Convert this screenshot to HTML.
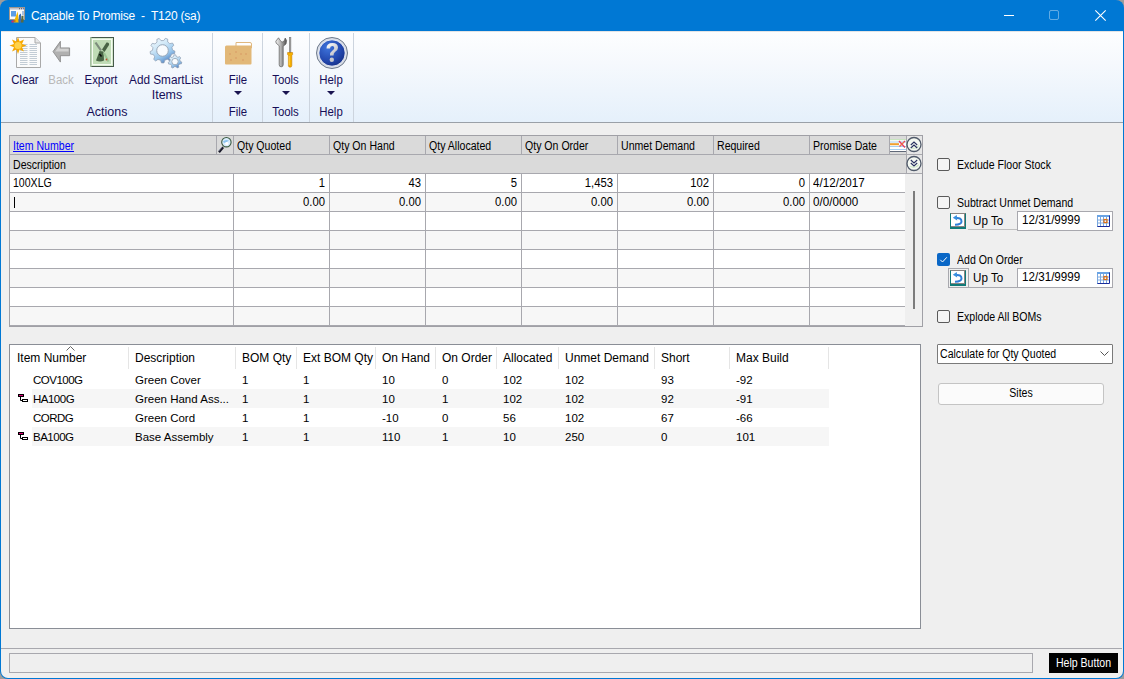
<!DOCTYPE html>
<html><head><meta charset="utf-8">
<style>
*{box-sizing:border-box;margin:0;padding:0}
html,body{width:1124px;height:679px;overflow:hidden;background:#9c9c9c}
body{font-family:"Liberation Sans",sans-serif;position:relative}
.a{position:absolute}
svg{position:absolute;overflow:visible}
#win{position:absolute;left:0;top:0;width:1124px;height:679px;background:#0078d4;border-radius:8px}
#client{position:absolute;left:1px;top:31px;width:1122px;height:647px;background:#efefef;border-radius:0 0 7px 7px}
#title{position:absolute;left:31px;top:7.5px;color:#fff;font-size:12px;letter-spacing:-0.22px;white-space:pre;line-height:16px}
#ribbon{position:absolute;left:1px;top:31px;width:1122px;height:92px;background:linear-gradient(#fdfeff 0%,#f6f9fd 35%,#e5f0fb 100%);border-bottom:1px solid #9aa0a8;box-shadow:inset 0 1px 0 rgba(0,0,0,0.10)}
.rl{position:absolute;color:#160e58;font-size:12px;white-space:pre;line-height:16px;text-align:center;transform:scaleX(0.95);transform-origin:50% 0}
.sep{position:absolute;top:33px;width:1px;height:89px;background:#ccd4de}
.tri{position:absolute;width:0;height:0;border-left:4px solid transparent;border-right:4px solid transparent;border-top:4px solid #1a1450}
.t{position:absolute;font-size:12px;white-space:pre;color:#000;line-height:13px;transform:scaleX(0.88);transform-origin:0 0}
.t.r{transform-origin:100% 0}
.t.c{transform-origin:50% 0}
.t.d{transform:scaleX(0.97)}
.t.n{transform:scaleX(0.94)}
.s{position:absolute;font-size:12px;white-space:pre;color:#000;line-height:14px}
.hl{position:absolute;height:1px;background:#a8a8ae}
.vl{position:absolute;width:1px;background:#a8a8ae}
.r{text-align:right}
.cb{position:absolute;width:13px;height:13px;border:1px solid #5a5a5a;border-radius:2px;background:#f4f4f4}
</style></head><body>
<div id="win"></div>
<div id="client"></div>

<!-- title bar -->
<svg style="left:9px;top:7px" width="17" height="17" viewBox="0 0 17 17">
  <rect x="0.5" y="0.5" width="15" height="12" fill="#fbfbfb" stroke="#a09890"/>
  <rect x="1" y="1" width="14" height="1.6" fill="#c4c4cc"/>
  <rect x="10" y="1.2" width="1" height="1" fill="#505060"/><rect x="12" y="1.2" width="1" height="1" fill="#505060"/><rect x="14" y="1.2" width="1" height="1" fill="#4060c0"/>
  <rect x="2" y="4" width="5" height="5.5" fill="#5c9ee6"/>
  <rect x="13.5" y="4" width="1" height="4" fill="#5a88c8"/>
  <path d="M4.5 15.5 L8.6 4.6 L10 15.5Z" fill="#f4b800"/>
  <path d="M9.4 15.5 L10 8 L12 6.5 L12.5 15.5Z" fill="#3c6cb0"/>
  <path d="M12 15.5 L12.5 9 L14.5 8.5 L14.5 15.5Z" fill="#5c6a3c"/>
  <rect x="2.5" y="13.5" width="2" height="2" fill="#e0206a"/>
  <rect x="4.5" y="13" width="2" height="2" fill="#c07020"/>
</svg>
<div id="title">Capable To Promise  -  T120 (sa)</div>
<div class="a" style="left:1004px;top:15px;width:10px;height:1px;background:#fff"></div>
<div class="a" style="left:1049px;top:10px;width:10px;height:10px;border:1px solid rgba(255,255,255,0.38);border-radius:2px"></div>
<svg style="left:1095px;top:10px" width="11" height="11" viewBox="0 0 11 11"><path d="M0.3 0.3 L10.7 10.7 M10.7 0.3 L0.3 10.7" stroke="#fff" stroke-width="1.1"/></svg>

<!-- ribbon -->
<div id="ribbon"></div>
<div class="sep" style="left:212px"></div>
<div class="sep" style="left:262px"></div>
<div class="sep" style="left:309px"></div>
<div class="sep" style="left:353px"></div>

<!-- Clear icon -->
<svg style="left:10px;top:37px" width="32" height="32" viewBox="0 0 32 32">
  <path d="M6.5 0.5 H25 L30.5 6 V30.5 H6.5Z" fill="#fbfbfb" stroke="#a9a9a9"/>
  <path d="M25 0.5 V6 H30.5" fill="#e6e6e6" stroke="#a9a9a9"/>
  <g stroke="#b4c0cc" stroke-width="0.8">
    <path d="M10 7.5H17.5 M19.5 7.5H27 M10 9.5H17.5 M19.5 9.5H27 M10 11.5H17.5 M19.5 11.5H27 M10 13.5H17.5 M19.5 13.5H27 M10 15.5H17.5 M19.5 15.5H27 M10 17.5H17.5 M19.5 17.5H27 M10 19.5H17.5 M19.5 19.5H27 M10 21.5H17.5 M19.5 21.5H27 M10 23.5H17.5 M19.5 23.5H27 M10 25.5H17.5 M19.5 25.5H27 M10 27.5H17.5 M19.5 27.5H27"/>
  </g>
  <path d="M8 0 L9.6 4.5 L14 2.5 L12 7 L16.5 8.5 L12 10.2 L14 14.5 L9.6 12.5 L8 17 L6.4 12.5 L2 14.5 L4 10.2 L-0.5 8.5 L4 7 L2 2.5 L6.4 4.5Z" fill="#f7a800"/>
  <circle cx="8" cy="8.5" r="3.6" fill="#ffd24a"/>
</svg>
<!-- Back icon -->
<svg style="left:53px;top:41px" width="18" height="22" viewBox="0 0 18 22">
  <path d="M0 10.6 L7.4 0.3 V6.9 H16.6 V14.7 H7.4 V21.1Z" fill="#b0b0b0" stroke="#848484" stroke-width="0.8" stroke-linejoin="round"/>
  <path d="M2.2 10.4 L6.6 4.2 V7.8 H15.6 V10.6 H2.2Z" fill="#d2d2d2"/>
</svg>
<!-- Export icon -->
<svg style="left:90px;top:37px" width="24" height="30" viewBox="0 0 24 30">
  <rect x="0.5" y="0.5" width="23" height="29" fill="#d4e8cc" stroke="#46584a"/>
  <rect x="0" y="0" width="1.5" height="30" fill="#a4bea0"/>
  <rect x="2.5" y="2.5" width="19" height="25" fill="#c0dcb6" stroke="#f4fbf0" stroke-width="1"/>
  <path d="M5.5 5.5 L11 13.5" stroke="#7c8c7c" stroke-width="2.2"/>
  <path d="M12 12.5 L16.5 5.5 Q19.5 5 19 8 L14.5 15Z" fill="#486444"/>
  <path d="M6 23.5 L9.5 14 L13.5 14.5 L14 23.5 Q10 25.5 6 23.5Z" fill="#4a6646"/>
  <path d="M9.5 17 L11.5 19.5" stroke="#0a0a0a" stroke-width="1.4"/>
  <path d="M14 16 L18.5 24.5" stroke="#9cc494" stroke-width="2"/>
  <circle cx="16.5" cy="22.5" r="0.9" fill="#c05030"/>
</svg>
<!-- Gears icon -->
<svg style="left:149px;top:37px" width="34" height="32" viewBox="0 0 34 32">
  <defs>
    <linearGradient id="gg" x1="0" y1="0" x2="0.6" y2="1"><stop offset="0" stop-color="#f4f9fd"/><stop offset="0.4" stop-color="#d2e9f8"/><stop offset="0.75" stop-color="#98c6ec"/><stop offset="1" stop-color="#5a88c4"/></linearGradient>
  </defs>
  <path d="M23.48,12.94 L25.98,14.20 L25.59,16.69 L22.82,17.12 L21.51,19.49 L22.61,22.06 L20.71,23.71 L18.32,22.26 L15.78,23.24 L14.98,25.91 L12.45,25.96 L11.56,23.31 L8.99,22.43 L6.66,23.96 L4.69,22.37 L5.71,19.77 L4.31,17.44 L1.53,17.11 L1.05,14.63 L3.50,13.29 L3.93,10.61 L2.01,8.58 L3.24,6.37 L5.98,6.91 L8.02,5.13 L7.86,2.34 L10.22,1.44 L11.97,3.62 L14.68,3.57 L16.35,1.33 L18.74,2.15 L18.68,4.95 L20.79,6.65 L23.51,6.01 L24.81,8.18 L22.97,10.28Z" fill="url(#gg)" stroke="#8c9cb0" stroke-width="0.7"/>
  <circle cx="13.5" cy="13.5" r="5.8" fill="#f8fbfe" stroke="#9aa8b8" stroke-width="1"/>
  <path d="M31.19,24.23 L32.78,25.09 L32.43,26.82 L30.62,26.98 L29.53,28.42 L29.85,30.21 L28.27,31.01 L27.02,29.70 L25.21,29.74 L24.02,31.10 L22.41,30.37 L22.65,28.58 L21.49,27.19 L19.68,27.10 L19.25,25.39 L20.80,24.46 L21.17,22.69 L20.10,21.22 L21.17,19.81 L22.87,20.45 L24.48,19.63 L24.97,17.88 L26.73,17.84 L27.29,19.56 L28.94,20.31 L30.61,19.60 L31.74,20.96 L30.74,22.47Z" fill="url(#gg)" stroke="#8c9cb0" stroke-width="0.7"/>
  <circle cx="26" cy="24.6" r="3.2" fill="#f8fbfe" stroke="#9aa8b8" stroke-width="0.9"/>
</svg>
<!-- Folder icon -->
<svg style="left:225px;top:42px" width="27" height="23" viewBox="0 0 27 23">
  <path d="M11 0.5 H25 Q26.5 0.5 26.5 2 V6 H11Z" fill="#fff" stroke="#e0b880"/>
  <path d="M0 5 Q0 3.5 1.5 3.5 H26.5 V21.5 Q26.5 22.5 25.5 22.5 H1 Q0 22.5 0 21.5Z" fill="#e2b878"/>
  <g fill="#d6915e"><circle cx="5" cy="12" r="0.7"/><circle cx="11" cy="10" r="0.7"/><circle cx="16" cy="12" r="0.7"/><circle cx="21" cy="12" r="0.7"/><circle cx="11" cy="16" r="0.7"/><circle cx="6" cy="18" r="0.7"/><circle cx="18" cy="18" r="0.7"/></g>
</svg>
<!-- Tools icon -->
<svg style="left:275px;top:37px" width="21" height="31" viewBox="0 0 21 31">
  <defs><linearGradient id="wr" x1="0" x2="1"><stop offset="0" stop-color="#f4f4f4"/><stop offset="0.45" stop-color="#b4b4b4"/><stop offset="1" stop-color="#505050"/></linearGradient></defs>
  <path d="M3.5 0.8 L0.8 4.2 L1.2 6.2 L4.2 8.8 L4.2 27.8 Q4.2 29.8 6.2 29.8 Q8.2 29.8 8.2 27.8 L8.2 9.2 L11 7 L11.6 3.6 L10.2 1 L9.2 4 L7 5.2 L5.2 3.4Z" fill="url(#wr)" stroke="#5a5a5a" stroke-width="0.7"/>
  <rect x="14.3" y="0.5" width="1.6" height="15.5" fill="#a8a8a8" stroke="#6a6a6a" stroke-width="0.5"/>
  <path d="M12.6 15.5 H17.6 V17.5 L16.8 18.5 V28.5 Q16.8 30.2 15.1 30.2 Q13.4 30.2 13.4 28.5 V18.5 L12.6 17.5Z" fill="#f5b000" stroke="#c47a00" stroke-width="0.6"/>
  <path d="M14.2 19 V28" stroke="#ffd860" stroke-width="0.8"/>
</svg>
<!-- Help icon -->
<svg style="left:316px;top:37px" width="32" height="32" viewBox="0 0 32 32">
  <defs><radialGradient id="hb" cx="0.35" cy="0.3" r="0.8"><stop offset="0" stop-color="#3e74dc"/><stop offset="0.65" stop-color="#2246ac"/><stop offset="1" stop-color="#142c80"/></radialGradient></defs>
  <circle cx="16" cy="16" r="15.5" fill="#d8dde6" stroke="#6e7a8c" stroke-width="1"/>
  <circle cx="16" cy="16" r="13.2" fill="url(#hb)" stroke="#fff" stroke-width="0.8"/>
  <defs><linearGradient id="qm" x1="0" y1="0" x2="1" y2="1"><stop offset="0" stop-color="#ffffff"/><stop offset="1" stop-color="#b8b8c0"/></linearGradient></defs><path d="M10.5 11.5 Q10.5 6 16.5 6 Q22 6 22 10.8 Q22 13.5 19 15 Q17.5 16 17.5 18.5 H14 Q14 15 16.5 13.5 Q18.3 12.4 18.3 11 Q18.3 9 16.2 9 Q14 9 14 11.5Z" fill="url(#qm)"/>
  <circle cx="15.8" cy="22.7" r="2.2" fill="#c8c8cc"/>
</svg>

<div class="rl" style="left:0px;width:50px;top:72px">Clear</div>
<div class="rl" style="left:36px;width:50px;top:72px;color:#b8b8b8">Back</div>
<div class="rl" style="left:76px;width:50px;top:72px">Export</div>
<div class="rl" style="left:116px;width:100px;top:72px;transform:scaleX(0.98)">Add SmartList</div>
<div class="rl" style="left:117px;width:100px;top:87px;transform:scaleX(1.04)">Items</div>
<div class="rl" style="left:57px;width:100px;top:104px;transform:scaleX(1.04)">Actions</div>
<div class="rl" style="left:213px;width:50px;top:72px">File</div>
<div class="rl" style="left:213px;width:50px;top:104px">File</div>
<div class="rl" style="left:262px;width:47px;top:72px">Tools</div>
<div class="rl" style="left:262px;width:47px;top:104px">Tools</div>
<div class="rl" style="left:309px;width:44px;top:72px">Help</div>
<div class="rl" style="left:309px;width:44px;top:104px">Help</div>
<div class="tri" style="left:234px;top:91px"></div>
<div class="tri" style="left:282px;top:91px"></div>
<div class="tri" style="left:327px;top:91px"></div>

<!-- TOP GRID -->
<div class="a" style="left:9px;top:135px;width:914px;height:192px;border:1px solid #a0a0a6;background:#efefef"></div>
<div class="a" style="left:10px;top:136px;width:896px;height:37px;background:#dadada"></div>
<div class="a" style="left:906px;top:136px;width:16px;height:37px;background:#e6e6e6"></div>
<!-- data row backgrounds -->
<div class="a" style="left:10px;top:174px;width:895px;height:18px;background:#fff"></div>
<div class="a" style="left:10px;top:193px;width:895px;height:18px;background:#f7f7f7"></div>
<div class="a" style="left:10px;top:212px;width:895px;height:18px;background:#fff"></div>
<div class="a" style="left:10px;top:231px;width:895px;height:18px;background:#f7f7f7"></div>
<div class="a" style="left:10px;top:250px;width:895px;height:18px;background:#fff"></div>
<div class="a" style="left:10px;top:269px;width:895px;height:18px;background:#f7f7f7"></div>
<div class="a" style="left:10px;top:288px;width:895px;height:18px;background:#fff"></div>
<div class="a" style="left:10px;top:307px;width:895px;height:18px;background:#f7f7f7"></div>
<!-- horizontal lines -->
<div class="hl" style="left:10px;top:154px;width:912px"></div>
<div class="hl" style="left:10px;top:173px;width:912px"></div>
<div class="hl" style="left:10px;top:192px;width:895px"></div>
<div class="hl" style="left:10px;top:211px;width:895px"></div>
<div class="hl" style="left:10px;top:230px;width:895px"></div>
<div class="hl" style="left:10px;top:249px;width:895px"></div>
<div class="hl" style="left:10px;top:268px;width:895px"></div>
<div class="hl" style="left:10px;top:287px;width:895px"></div>
<div class="hl" style="left:10px;top:306px;width:895px"></div>
<div class="hl" style="left:10px;top:325px;width:895px"></div>
<!-- header vertical lines -->
<div class="vl" style="left:216px;top:136px;height:18px"></div>
<div class="vl" style="left:889px;top:136px;height:18px"></div>
<div class="vl" style="left:906px;top:136px;height:37px"></div>
<!-- column lines -->
<div class="vl" style="left:233px;top:136px;height:18px"></div>
<div class="vl" style="left:329px;top:136px;height:18px"></div>
<div class="vl" style="left:425px;top:136px;height:18px"></div>
<div class="vl" style="left:521px;top:136px;height:18px"></div>
<div class="vl" style="left:617px;top:136px;height:18px"></div>
<div class="vl" style="left:713px;top:136px;height:18px"></div>
<div class="vl" style="left:809px;top:136px;height:18px"></div>
<div class="vl" style="left:233px;top:174px;height:152px"></div>
<div class="vl" style="left:329px;top:174px;height:152px"></div>
<div class="vl" style="left:425px;top:174px;height:152px"></div>
<div class="vl" style="left:521px;top:174px;height:152px"></div>
<div class="vl" style="left:617px;top:174px;height:152px"></div>
<div class="vl" style="left:713px;top:174px;height:152px"></div>
<div class="vl" style="left:809px;top:174px;height:152px"></div>
<!-- scrollbar thumb -->
<div class="a" style="left:913px;top:191px;width:2px;height:118px;background:#7c7c7c"></div>

<!-- header texts -->
<div class="t" style="left:13px;top:140px;color:#0000ff;text-decoration:underline">Item Number</div>
<svg style="left:218px;top:137px" width="15" height="16" viewBox="0 0 15 16">
  <path d="M1 15.2 L5.2 10.2" stroke="#1a1a2a" stroke-width="2.2"/>
  <path d="M0.6 14 L4.2 9.8" stroke="#8890a8" stroke-width="0.8"/>
  <circle cx="8.4" cy="5.2" r="4.7" fill="#d8ecfc" stroke="#3a5a40" stroke-width="1.1"/>
  <path d="M5 4.5 Q7 2 11 3.5 Q9 5 6 6Z" fill="#8cc4f0"/>
  <circle cx="8.8" cy="6.5" r="1.6" fill="#fff"/>
</svg>
<div class="t" style="left:237px;top:140px">Qty Quoted</div>
<div class="t" style="left:333px;top:140px">Qty On Hand</div>
<div class="t" style="left:429px;top:140px">Qty Allocated</div>
<div class="t" style="left:525px;top:140px">Qty On Order</div>
<div class="t" style="left:621px;top:140px">Unmet Demand</div>
<div class="t" style="left:717px;top:140px">Required</div>
<div class="t" style="left:813px;top:140px">Promise Date</div>
<svg style="left:890px;top:139px" width="16" height="13" viewBox="0 0 16 13">
  <rect x="0" y="0" width="16" height="13" fill="#fff"/>
  <rect x="0" y="0" width="16" height="1.2" fill="#c8e4c0"/>
  <rect x="0" y="2.5" width="16" height="1" fill="#a8d0f0"/>
  <rect x="0" y="7" width="16" height="1" fill="#a8d0f0"/>
  <rect x="0" y="10" width="16" height="1" fill="#a8d0f0"/>
  <rect x="0" y="4.2" width="9" height="2" fill="#f0a030"/>
  <path d="M0 12.5 H16" stroke="#606878" stroke-width="1"/>
  <path d="M9 2 L15 8.5 M15 2 L9.5 7.5" stroke="#e84060" stroke-width="1.4"/>
  <path d="M14 3 L10 7" stroke="#f09030" stroke-width="0.8"/>
</svg>
<svg style="left:906px;top:136px" width="17" height="36" viewBox="0 0 17 36">
  <circle cx="8" cy="8.5" r="7" fill="#f4f8f2" stroke="#505a6a" stroke-width="1.3"/>
  <path d="M3 11 Q6 14 11 12 Q13 11 13 9 L9 12Z" fill="#c8e4c0"/>
  <path d="M4.8 9 L8 6 L11.2 9 M4.8 12 L8 9 L11.2 12" stroke="#283060" stroke-width="1.1" fill="none"/>
  <circle cx="8" cy="27.5" r="7" fill="#f4f8f2" stroke="#505a6a" stroke-width="1.3"/>
  <path d="M3 30 Q6 33 11 31 Q13 30 13 28 L9 31Z" fill="#c8e4c0"/>
  <path d="M4.8 24 L8 27 L11.2 24 M4.8 27 L8 30 L11.2 27" stroke="#283060" stroke-width="1.1" fill="none"/>
</svg>
<div class="t" style="left:13px;top:159px">Description</div>

<!-- data rows -->
<div class="t" style="left:13px;top:177px">100XLG</div>
<div class="t r n" style="left:233px;width:92px;top:177px">1</div>
<div class="t r n" style="left:329px;width:92px;top:177px">43</div>
<div class="t r n" style="left:425px;width:92px;top:177px">5</div>
<div class="t r n" style="left:521px;width:92px;top:177px">1,453</div>
<div class="t r n" style="left:617px;width:92px;top:177px">102</div>
<div class="t r n" style="left:713px;width:92px;top:177px">0</div>
<div class="t d" style="left:813px;top:177px">4/12/2017</div>
<div class="a" style="left:14px;top:197px;width:1px;height:11px;background:#000"></div>
<div class="t r n" style="left:233px;width:92px;top:196px">0.00</div>
<div class="t r n" style="left:329px;width:92px;top:196px">0.00</div>
<div class="t r n" style="left:425px;width:92px;top:196px">0.00</div>
<div class="t r n" style="left:521px;width:92px;top:196px">0.00</div>
<div class="t r n" style="left:617px;width:92px;top:196px">0.00</div>
<div class="t r n" style="left:713px;width:92px;top:196px">0.00</div>
<div class="t d" style="left:813px;top:196px">0/0/0000</div>

<!-- RIGHT PANEL -->
<div class="cb" style="left:937px;top:158px"></div>
<div class="t" style="left:957px;top:159px">Exclude Floor Stock</div>
<div class="cb" style="left:937px;top:196px"></div>
<div class="t" style="left:957px;top:197px">Subtract Unmet Demand</div>

<div class="a" style="left:968px;top:229px;width:49px;height:1px;background:#c0c0c0"></div>
<div class="a" style="left:950px;top:213px;width:16px;height:16px;background:#fff;border:1px solid #0f7a78;border-top-color:#8a8482;border-bottom:2px solid #0f7a78;box-shadow:inset -1px 0 0 #8a8482, inset 0 -1px 0 #8a8482"></div>
<svg style="left:952px;top:215px" width="12" height="12" viewBox="0 0 12 12"><path d="M4 3 Q9.5 2.5 9.5 6.5 Q9.5 9.5 3 9.8" stroke="#2f7fd8" stroke-width="2" fill="none"/><path d="M0.8 2.8 L4.8 0 L5.2 5.5Z" fill="#3a90e0"/></svg>
<div class="t d" style="left:973px;top:215px">Up To</div>
<div class="a" style="left:1017px;top:211px;width:96px;height:20px;background:#fff;border:1px solid #a8a8ae"></div>
<div class="t d" style="left:1022px;top:214px">12/31/9999</div>
<svg style="left:1097px;top:215px" width="13" height="12" viewBox="0 0 13 12">
  <rect x="0" y="0" width="13" height="12" fill="#fff"/>
  <rect x="0" y="0" width="13" height="2" fill="#6aa4e4"/>
  <path d="M0.5 2V12 M3.5 2V12 M6.5 2V12 M9.5 2V12 M0 5H13 M0 8H13" stroke="#7aa8e0" stroke-width="1"/>
  <path d="M12.5 0.5V11.5H0.5" stroke="#1a2c9c" stroke-width="1" fill="none"/>
  <rect x="7" y="4.5" width="3" height="3" fill="none" stroke="#e07010" stroke-width="1.2"/>
</svg>

<div class="a" style="left:937px;top:253px;width:13px;height:13px;border-radius:2px;background:#0a67c6"></div>
<svg style="left:937px;top:253px" width="13" height="13" viewBox="0 0 13 13"><path d="M3.3 6.8 L5.5 9 L9.8 4.3" stroke="#fff" stroke-width="1" fill="none"/></svg>
<div class="t" style="left:957px;top:254px">Add On Order</div>

<div class="a" style="left:948px;top:268px;width:21px;height:20px;border:1px solid #a8a8ae"></div>
<div class="a" style="left:968px;top:287px;width:49px;height:1px;background:#a8a8ae"></div>
<div class="a" style="left:950px;top:270px;width:16px;height:16px;background:#fff;border:1px solid #0f7a78;border-top-color:#8a8482;border-bottom:2px solid #0f7a78;box-shadow:inset -1px 0 0 #8a8482, inset 0 -1px 0 #8a8482"></div>
<svg style="left:952px;top:272px" width="12" height="12" viewBox="0 0 12 12"><path d="M4 3 Q9.5 2.5 9.5 6.5 Q9.5 9.5 3 9.8" stroke="#2f7fd8" stroke-width="2" fill="none"/><path d="M0.8 2.8 L4.8 0 L5.2 5.5Z" fill="#3a90e0"/></svg>
<div class="t d" style="left:973px;top:272px">Up To</div>
<div class="a" style="left:1017px;top:268px;width:96px;height:20px;background:#fff;border:1px solid #a8a8ae"></div>
<div class="t d" style="left:1022px;top:271px">12/31/9999</div>
<svg style="left:1097px;top:272px" width="13" height="12" viewBox="0 0 13 12">
  <rect x="0" y="0" width="13" height="12" fill="#fff"/>
  <rect x="0" y="0" width="13" height="2" fill="#6aa4e4"/>
  <path d="M0.5 2V12 M3.5 2V12 M6.5 2V12 M9.5 2V12 M0 5H13 M0 8H13" stroke="#7aa8e0" stroke-width="1"/>
  <path d="M12.5 0.5V11.5H0.5" stroke="#1a2c9c" stroke-width="1" fill="none"/>
  <rect x="7" y="4.5" width="3" height="3" fill="none" stroke="#e07010" stroke-width="1.2"/>
</svg>

<div class="cb" style="left:937px;top:310px"></div>
<div class="t" style="left:957px;top:311px">Explode All BOMs</div>

<div class="a" style="left:937px;top:344px;width:176px;height:20px;background:#fff;border:1px solid #7a7a7a;border-radius:1px"></div>
<div class="t" style="left:940px;top:348px">Calculate for Qty Quoted</div>
<svg style="left:1100px;top:351px" width="9" height="6" viewBox="0 0 9 6"><path d="M0.5 0.5 L4.5 4.5 L8.5 0.5" stroke="#555" stroke-width="1" fill="none"/></svg>

<div class="a" style="left:938px;top:383px;width:166px;height:22px;background:#fbfbfb;border:1px solid #c4c4c4;border-radius:3px"></div>
<div class="t c" style="left:938px;width:166px;top:387px;text-align:center">Sites</div>

<!-- LOWER LIST -->
<div class="a" style="left:9px;top:344px;width:912px;height:285px;background:#fff;border:1px solid #8a8e96"></div>
<div class="a" style="left:32px;top:389px;width:797px;height:19px;background:#f6f6f6"></div>
<div class="a" style="left:32px;top:427px;width:797px;height:19px;background:#f6f6f6"></div>
<div class="a" style="left:128px;top:347px;width:1px;height:22px;background:#e5e5e5"></div>
<div class="a" style="left:235px;top:347px;width:1px;height:22px;background:#e5e5e5"></div>
<div class="a" style="left:296px;top:347px;width:1px;height:22px;background:#e5e5e5"></div>
<div class="a" style="left:375px;top:347px;width:1px;height:22px;background:#e5e5e5"></div>
<div class="a" style="left:435px;top:347px;width:1px;height:22px;background:#e5e5e5"></div>
<div class="a" style="left:496px;top:347px;width:1px;height:22px;background:#e5e5e5"></div>
<div class="a" style="left:558px;top:347px;width:1px;height:22px;background:#e5e5e5"></div>
<div class="a" style="left:654px;top:347px;width:1px;height:22px;background:#e5e5e5"></div>
<div class="a" style="left:729px;top:347px;width:1px;height:22px;background:#e5e5e5"></div>
<div class="a" style="left:828px;top:347px;width:1px;height:22px;background:#e5e5e5"></div>
<svg style="left:66px;top:346px" width="9" height="5" viewBox="0 0 9 5"><path d="M0.5 4.5 L4.5 0.5 L8.5 4.5" stroke="#666" stroke-width="1" fill="none"/></svg>

<div class="s" style="left:17px;top:351px">Item Number</div>
<div class="s" style="left:135px;top:351px">Description</div>
<div class="s" style="left:242px;top:351px">BOM Qty</div>
<div class="s" style="left:303px;top:351px">Ext BOM Qty</div>
<div class="s" style="left:382px;top:351px">On Hand</div>
<div class="s" style="left:442px;top:351px">On Order</div>
<div class="s" style="left:503px;top:351px">Allocated</div>
<div class="s" style="left:565px;top:351px">Unmet Demand</div>
<div class="s" style="left:661px;top:351px">Short</div>
<div class="s" style="left:736px;top:351px">Max Build</div>

<svg style="left:18px;top:394px" width="11" height="9" viewBox="0 0 11 9"><path d="M2.5 3 V6.5 H4.5" stroke="#000" stroke-width="1" fill="none"/><rect x="0.5" y="0.5" width="5" height="2" fill="#e0007a" stroke="#000" stroke-width="1"/><rect x="4.5" y="5.5" width="5" height="2" fill="#fff" stroke="#000" stroke-width="1"/></svg>
<svg style="left:18px;top:432px" width="11" height="9" viewBox="0 0 11 9"><path d="M2.5 3 V6.5 H4.5" stroke="#000" stroke-width="1" fill="none"/><rect x="0.5" y="0.5" width="5" height="2" fill="#e0007a" stroke="#000" stroke-width="1"/><rect x="4.5" y="5.5" width="5" height="2" fill="#fff" stroke="#000" stroke-width="1"/></svg>

<div class="s" style="left:33px;top:373px;font-size:11.5px;letter-spacing:-0.5px">COV100G</div>
<div class="s" style="left:135px;top:373px;font-size:11.5px">Green Cover</div>
<div class="s" style="left:242px;top:373px;font-size:11.5px">1</div>
<div class="s" style="left:303px;top:373px;font-size:11.5px">1</div>
<div class="s" style="left:382px;top:373px;font-size:11.5px">10</div>
<div class="s" style="left:442px;top:373px;font-size:11.5px">0</div>
<div class="s" style="left:503px;top:373px;font-size:11.5px">102</div>
<div class="s" style="left:565px;top:373px;font-size:11.5px">102</div>
<div class="s" style="left:661px;top:373px;font-size:11.5px">93</div>
<div class="s" style="left:736px;top:373px;font-size:11.5px">-92</div>

<div class="s" style="left:33px;top:392px;font-size:11.5px;letter-spacing:-0.5px">HA100G</div>
<div class="s" style="left:135px;top:392px;font-size:11.5px">Green Hand Ass...</div>
<div class="s" style="left:242px;top:392px;font-size:11.5px">1</div>
<div class="s" style="left:303px;top:392px;font-size:11.5px">1</div>
<div class="s" style="left:382px;top:392px;font-size:11.5px">10</div>
<div class="s" style="left:442px;top:392px;font-size:11.5px">1</div>
<div class="s" style="left:503px;top:392px;font-size:11.5px">102</div>
<div class="s" style="left:565px;top:392px;font-size:11.5px">102</div>
<div class="s" style="left:661px;top:392px;font-size:11.5px">92</div>
<div class="s" style="left:736px;top:392px;font-size:11.5px">-91</div>

<div class="s" style="left:33px;top:411px;font-size:11.5px;letter-spacing:-0.5px">CORDG</div>
<div class="s" style="left:135px;top:411px;font-size:11.5px">Green Cord</div>
<div class="s" style="left:242px;top:411px;font-size:11.5px">1</div>
<div class="s" style="left:303px;top:411px;font-size:11.5px">1</div>
<div class="s" style="left:382px;top:411px;font-size:11.5px">-10</div>
<div class="s" style="left:442px;top:411px;font-size:11.5px">0</div>
<div class="s" style="left:503px;top:411px;font-size:11.5px">56</div>
<div class="s" style="left:565px;top:411px;font-size:11.5px">102</div>
<div class="s" style="left:661px;top:411px;font-size:11.5px">67</div>
<div class="s" style="left:736px;top:411px;font-size:11.5px">-66</div>

<div class="s" style="left:33px;top:430px;font-size:11.5px;letter-spacing:-0.5px">BA100G</div>
<div class="s" style="left:135px;top:430px;font-size:11.5px">Base Assembly</div>
<div class="s" style="left:242px;top:430px;font-size:11.5px">1</div>
<div class="s" style="left:303px;top:430px;font-size:11.5px">1</div>
<div class="s" style="left:382px;top:430px;font-size:11.5px">110</div>
<div class="s" style="left:442px;top:430px;font-size:11.5px">1</div>
<div class="s" style="left:503px;top:430px;font-size:11.5px">10</div>
<div class="s" style="left:565px;top:430px;font-size:11.5px">250</div>
<div class="s" style="left:661px;top:430px;font-size:11.5px">0</div>
<div class="s" style="left:736px;top:430px;font-size:11.5px">101</div>

<!-- STATUS BAR -->
<div class="a" style="left:1px;top:648px;width:1121px;height:1px;background:#a8a8ae"></div>
<div class="a" style="left:9px;top:653px;width:1024px;height:20px;border:1px solid #a8a8ae"></div>
<div class="a" style="left:1049px;top:653px;width:69px;height:20px;background:#000"></div>
<div class="t c" style="left:1049px;width:69px;top:657px;color:#fff;text-align:center">Help Button</div>
</body></html>
